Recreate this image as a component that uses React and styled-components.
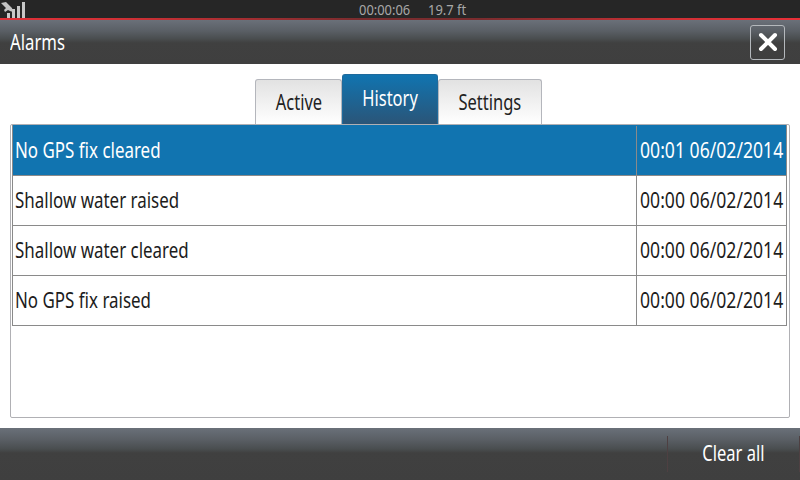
import styled, { createGlobalStyle } from 'styled-components';

const GlobalStyle = createGlobalStyle`
  html, body { margin: 0; padding: 0; background: #fff; }
  body { font-family: "Noto Sans", "Open Sans", sans-serif; }
`;

const alarms = [
  { name: 'No GPS fix cleared', time: '00:01 06/02/2014' },
  { name: 'Shallow water raised', time: '00:00 06/02/2014' },
  { name: 'Shallow water cleared', time: '00:00 06/02/2014' },
  { name: 'No GPS fix raised', time: '00:00 06/02/2014' },
];

const Screen = styled.div`
  width: 800px;
  height: 480px;
  display: flex;
  flex-direction: column;
  overflow: hidden;
`;

const StatusBar = styled.div`
  height: 18px;
  box-sizing: border-box;
  background: #262626;
  display: flex;
  align-items: center;
  justify-content: center;
  gap: 17px;
  padding: 0 0 1px 23px;
  position: relative;
  color: #a8a8a8;
  font-size: 15px;
  line-height: 16px;
`;

const StatusText = styled.span`
  display: block;
  width: ${(p) => p.$width}px;
  transform: scaleX(0.86);
  transform-origin: left center;
  white-space: nowrap;
`;

const SignalIcon = styled.svg`
  position: absolute;
  left: 0;
  top: 0;
`;

const RedLine = styled.div`
  height: 2px;
  background: linear-gradient(90deg, #e03038 0%, #d03035 15%, #7a2c2e 45%, #7a2c2e 60%, #d03035 85%, #e83038 100%);
`;

const Header = styled.div`
  height: 44px;
  box-sizing: border-box;
  background: linear-gradient(180deg, #6a7079 0%, #5a5f65 25%, #4a4e50 42%, #404040 52%, #3f3f3f 100%);
  display: flex;
  align-items: center;
  justify-content: space-between;
  padding: 0 15px 0 10px;
`;

const Title = styled.span`
  display: inline-block;
  color: #fff;
  font-size: 22px;
  padding-bottom: 3px;
  transform: scaleX(0.76);
  transform-origin: left center;
`;

const CloseButton = styled.button`
  width: 35px;
  height: 35px;
  padding: 0;
  background: transparent;
  border: 1px solid #b4b8bc;
  border-radius: 3px;
  display: flex;
  align-items: center;
  justify-content: center;
`;

const Body = styled.div`
  flex: 1;
  background: #fff;
  display: flex;
  flex-direction: column;
  padding: 10px;
`;

const Tabs = styled.div`
  display: flex;
  justify-content: center;
  align-items: flex-end;
  height: 50px;
  padding-right: 3px;
`;

const Tab = styled.div`
  width: ${(p) => p.$width}px;
  height: ${(p) => (p.$active ? 50 : 45)}px;
  box-sizing: border-box;
  border: 1px solid ${(p) => (p.$active ? '#1f6a9c' : '#b4b6bc')};
  border-bottom: none;
  border-radius: 3px 3px 0 0;
  background: ${(p) =>
    p.$active
      ? 'linear-gradient(180deg, #1174b0 0%, #2a5578 100%)'
      : 'linear-gradient(180deg, #e2e2e2 0%, #ffffff 100%)'};
  color: ${(p) => (p.$active ? '#fff' : '#222')};
  font-size: 22px;
  display: flex;
  align-items: center;
  justify-content: center;
  padding-bottom: ${(p) => (p.$active ? 6 : 3)}px;
`;

const TabLabel = styled.span`
  display: inline-block;
  white-space: nowrap;
  transform: scaleX(0.75);
`;

const Panel = styled.div`
  height: 294px;
  box-sizing: border-box;
  border: 1px solid #b0b0b4;
  border-radius: 2px;
  padding: 0 2px 0 1px;
`;

const Table = styled.div`
  border-left: 1px solid #8a8a8a;
  border-right: 1px solid #8a8a8a;
  border-bottom: 1px solid #8a8a8a;
`;

const Row = styled.div`
  display: flex;
  height: 50px;
  box-sizing: border-box;
  border-top: 1px solid ${(p) => (p.$first ? 'transparent' : '#8a8a8a')};
  background: ${(p) => (p.$selected ? '#1174b0' : '#fff')};
  color: ${(p) => (p.$selected ? '#fff' : '#1c1c1c')};
  font-size: 22px;
`;

const NameCell = styled.div`
  flex: 1;
  display: flex;
  align-items: center;
  padding: 0 0 3px 2px;
`;

const TimeCell = styled.div`
  width: 150px;
  box-sizing: border-box;
  border-left: 1px solid #8a8a8a;
  display: flex;
  align-items: center;
  padding: 0 0 3px 3px;
  white-space: nowrap;
`;

const CellText = styled.span`
  display: inline-block;
  white-space: nowrap;
  transform: scaleX(${(p) => p.$scale});
  transform-origin: left center;
`;

const Footer = styled.div`
  height: 52px;
  background: linear-gradient(180deg, #6a7079 0%, #5a5f65 22%, #4a4e50 40%, #404040 48%, #3f3f3f 100%);
  display: flex;
  justify-content: flex-end;
  align-items: center;
`;

const FooterButton = styled.button`
  width: 133px;
  height: 36px;
  background: transparent;
  border: none;
  border-left: 1px solid #4e4042;
  border-right: 1px solid #4e4042;
  color: #fff;
  font-family: inherit;
  font-size: 22px;
  padding: 0 0 5px;
  display: flex;
  align-items: center;
  justify-content: center;
`;

export default function App() {
  return (
    <Screen>
      <GlobalStyle />
      <StatusBar>
        <SignalIcon width="28" height="18" viewBox="0 0 28 18">
          <path d="M1 3 L6 2 L12 8 L13 12 L10 11 L8 10 L5 12 L4 10 L6 8 Z" fill="#c4c4c4" />
          <rect x="7" y="13" width="3" height="5" fill="#c8c8c8" />
          <rect x="12" y="9" width="3" height="9" fill="#c8c8c8" />
          <rect x="17" y="6" width="3" height="12" fill="#c8c8c8" />
          <rect x="22" y="2" width="3" height="16" fill="#c8c8c8" />
        </SignalIcon>
        <StatusText $width={52}>00:00:06</StatusText>
        <StatusText $width={36}>19.7 ft</StatusText>
      </StatusBar>
      <RedLine />
      <Header>
        <Title>Alarms</Title>
        <CloseButton>
          <svg width="20" height="20" viewBox="0 0 20 20">
            <path d="M3 3 L17 17 M17 3 L3 17" stroke="#fff" strokeWidth="4" strokeLinecap="round" />
          </svg>
        </CloseButton>
      </Header>
      <Body>
        <Tabs>
          <Tab $width={87}><TabLabel>Active</TabLabel></Tab>
          <Tab $width={96} $active><TabLabel>History</TabLabel></Tab>
          <Tab $width={104}><TabLabel>Settings</TabLabel></Tab>
        </Tabs>
        <Panel>
          <Table>
            {alarms.map((a, i) => (
              <Row key={a.name} $first={i === 0} $selected={i === 0}>
                <NameCell><CellText $scale={0.77}>{a.name}</CellText></NameCell>
                <TimeCell><CellText $scale={0.8}>{a.time}</CellText></TimeCell>
              </Row>
            ))}
          </Table>
        </Panel>
      </Body>
      <Footer>
        <FooterButton><TabLabel>Clear all</TabLabel></FooterButton>
      </Footer>
    </Screen>
  );
}
